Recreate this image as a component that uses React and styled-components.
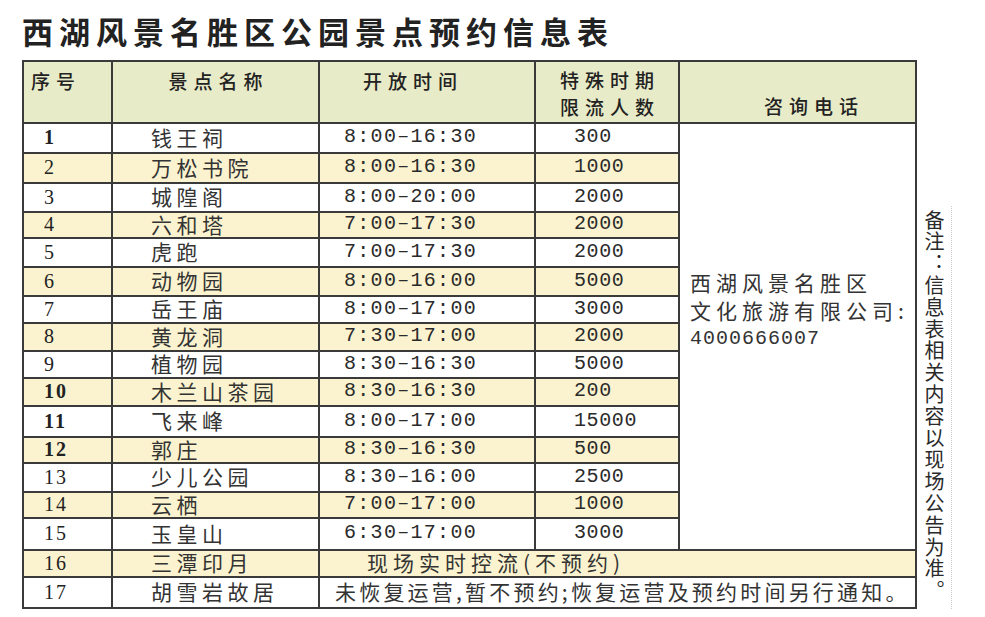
import React from "react";
import styled, { createGlobalStyle } from "styled-components";

const GlobalStyle = createGlobalStyle`
  html, body { margin: 0; padding: 0; background: #ffffff; }
  body {
    font-family: "Noto Sans CJK SC", "Noto Sans", sans-serif;
    color: #2a2a2a;
  }
`;

const CJK = `"Noto Sans CJK SC", "Noto Sans", sans-serif`;
const MONO = `"Liberation Mono", "Noto Sans CJK SC", monospace`;
const SERIF = `"Liberation Serif", "Noto Sans CJK SC", serif`;

const COLORS = {
  header: "#e8ebc7",
  yellow: "#fbf3cf",
  white: "#ffffff",
  line: "#3a3a3a",
};

const ROW_HEIGHTS = [28, 28, 27, 24, 27, 27, 25, 26, 25, 26, 29, 24, 27, 24, 30, 25, 29];

const Page = styled.div`
  padding: 12px 0 0 22px;
  width: 985px;
  height: 617px;
  box-sizing: border-box;
  overflow: hidden;
`;

const Title = styled.h1`
  margin: 0 0 10px 0;
  font-family: ${CJK};
  font-size: 31px;
  font-weight: 700;
  letter-spacing: 6px;
  line-height: 38px;
  color: #222;
`;

const Body = styled.div`
  display: flex;
  align-items: stretch;
`;

const Grid = styled.div`
  display: grid;
  width: 895px;
  box-sizing: border-box;
  grid-template-columns: 87px 205px 214px 142px 235px;
  grid-template-rows: 60px ${ROW_HEIGHTS.map((h) => `${h}px`).join(" ")};
  gap: 2px;
  padding: 2px;
  background: ${COLORS.line};
`;

const HeadCell = styled.div`
  background: ${COLORS.header};
  font-family: ${CJK};
  font-size: 19px;
  font-weight: 500;
  letter-spacing: 6px;
  line-height: 27px;
  color: #222;
  padding: ${(p) => p.$pad || "5px 0 0 0"};
  text-align: ${(p) => (p.$center ? "center" : "left")};
  white-space: nowrap;
`;

const Cell = styled.div`
  background: ${(p) => COLORS[p.$bg || "white"]};
  display: flex;
  align-items: center;
  padding-left: ${(p) => p.$pl || 0}px;
  padding-bottom: 2px;
  box-sizing: border-box;
  white-space: nowrap;
  line-height: 1;
  grid-column: ${(p) => p.$col || "auto"};
`;

const NumText = styled.span`
  display: block;
  line-height: 1;
  font-family: ${SERIF};
  font-size: 20px;
  font-weight: ${(p) => (p.$bold ? 700 : 400)};
  letter-spacing: 2px;
  color: #222;
`;

const NameText = styled.span`
  display: block;
  line-height: 1;
  font-family: ${CJK};
  font-size: 21px;
  letter-spacing: 4.5px;
  color: #333;
`;

const DigitText = styled.span`
  display: block;
  line-height: 1;
  font-family: ${MONO};
  font-size: 20px;
  letter-spacing: ${(p) => p.$ls || 1.3}px;
  color: #2a2a2a;
`;

const WideText = styled.span`
  display: block;
  line-height: 1;
  font-family: ${CJK};
  font-size: 21px;
  letter-spacing: ${(p) => p.$ls}px;
  color: #333;
`;

const ContactCell = styled.div`
  grid-column: 5;
  grid-row: 2 / span 15;
  background: ${COLORS.white};
  padding: 148px 0 0 10px;
  color: #333;
  white-space: nowrap;
  display: flex;
  flex-direction: column;
  gap: 7px;
`;

const ContactLine = styled.div`
  line-height: 21px;
  font-family: ${(p) => (p.$mono ? MONO : CJK)};
  font-size: ${(p) => (p.$mono ? "20px" : "21px")};
  letter-spacing: ${(p) => (p.$mono ? "1px" : "5px")};
`;

const Note = styled.div`
  align-self: flex-end;
  width: 35px;
  height: 403px;
  box-sizing: border-box;
  padding-top: 4px;
  border-right: 1px dotted #c8c8c8;
  display: flex;
  justify-content: center;
`;

const NoteText = styled.div`
  writing-mode: vertical-rl;
  font-family: ${CJK};
  font-size: 20px;
  line-height: 1;
  letter-spacing: 1.8px;
  font-feature-settings: "vert" 0, "vrt2" 0;
  color: #2a2a2a;
`;

const rows = [
  ["1", "钱王祠", "8:00–16:30", "300"],
  ["2", "万松书院", "8:00–16:30", "1000"],
  ["3", "城隍阁", "8:00–20:00", "2000"],
  ["4", "六和塔", "7:00–17:30", "2000"],
  ["5", "虎跑", "7:00–17:30", "2000"],
  ["6", "动物园", "8:00–16:00", "5000"],
  ["7", "岳王庙", "8:00–17:00", "3000"],
  ["8", "黄龙洞", "7:30–17:00", "2000"],
  ["9", "植物园", "8:30–16:30", "5000"],
  ["10", "木兰山茶园", "8:30–16:30", "200"],
  ["11", "飞来峰", "8:00–17:00", "15000"],
  ["12", "郭庄", "8:30–16:30", "500"],
  ["13", "少儿公园", "8:30–16:00", "2500"],
  ["14", "云栖", "7:00–17:00", "1000"],
  ["15", "玉皇山", "6:30–17:00", "3000"],
];

const boldNums = new Set(["1", "10", "11", "12"]);

export default function App() {
  return (
    <>
      <GlobalStyle />
      <Page>
        <Title>西湖风景名胜区公园景点预约信息表</Title>
        <Body>
          <Grid>
            <HeadCell $pad="5px 0 0 7px">序号</HeadCell>
            <HeadCell $center $pad="5px 0 0 6px">景点名称</HeadCell>
            <HeadCell $pad="5px 0 0 43px">开放时间</HeadCell>
            <HeadCell $center $pad="4px 0 0 6px">
              特殊时期
              <br />
              限流人数
            </HeadCell>
            <HeadCell $center $pad="30px 0 0 33px">咨询电话</HeadCell>

            <ContactCell>
              <ContactLine>西湖风景名胜区</ContactLine>
              <ContactLine>文化旅游有限公司:</ContactLine>
              <ContactLine $mono>4000666007</ContactLine>
            </ContactCell>

            {rows.map(([n, name, time, limit], i) => {
              const bg = i % 2 === 1 ? "yellow" : "white";
              return (
                <React.Fragment key={n}>
                  <Cell $bg={bg} $pl={20}>
                    <NumText $bold={boldNums.has(n)}>{n}</NumText>
                  </Cell>
                  <Cell $bg={bg} $pl={38}>
                    <NameText>{name}</NameText>
                  </Cell>
                  <Cell $bg={bg} $pl={24}>
                    <DigitText>{time}</DigitText>
                  </Cell>
                  <Cell $bg={bg} $pl={38}>
                    <DigitText $ls={0.6}>{limit}</DigitText>
                  </Cell>
                </React.Fragment>
              );
            })}

            <Cell $bg="yellow" $pl={20}>
              <NumText>16</NumText>
            </Cell>
            <Cell $bg="yellow" $pl={38}>
              <NameText>三潭印月</NameText>
            </Cell>
            <Cell $bg="yellow" $pl={47} $col="3 / span 3">
              <WideText $ls={5}>现场实时控流(不预约)</WideText>
            </Cell>

            <Cell $bg="white" $pl={20}>
              <NumText>17</NumText>
            </Cell>
            <Cell $bg="white" $pl={38}>
              <NameText>胡雪岩故居</NameText>
            </Cell>
            <Cell $bg="white" $pl={15} $col="3 / span 3">
              <WideText $ls={3.2}>未恢复运营,暂不预约;恢复运营及预约时间另行通知。</WideText>
            </Cell>
          </Grid>
          <Note>
            <NoteText>备注：信息表相关内容以现场公告为准。</NoteText>
          </Note>
        </Body>
      </Page>
    </>
  );
}
